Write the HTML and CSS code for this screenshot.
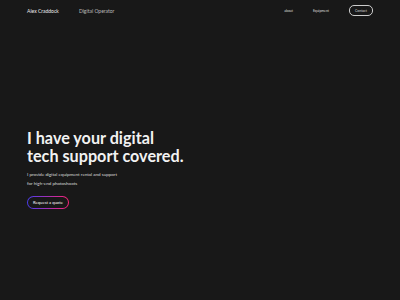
FILE: index.html
```html
<!DOCTYPE html>
<html lang="en">
<head>
    <meta charset="UTF-8">
    <meta name="viewport" content="width=device-width, initial-scale=1.0">
    <title>Alex Craddock - Digital Operator</title>
    <link rel="stylesheet" href="styles.css">
</head>
<body>
    <header class="nav">
        <div class="brand">
            <span class="name">Alex Craddock</span>
            <span class="role">Digital Operator</span>
        </div>
        <nav class="links">
            <a href="#about">about</a>
            <a href="#equipment">Equipment</a>
            <a href="#contact" class="contact">Contact</a>
        </nav>
    </header>

    <main class="hero">
        <h1>I have your digital<br>tech support covered.</h1>
        <p>I provide digital equipment rental and support<br>for high-end photoshoots</p>
        <a href="#quote" class="quote"><span>Request a quote</span></a>
    </main>
</body>
</html>
```

FILE: styles.css
```css
body {
    font-family: Lato, "Noto Sans", sans-serif;
    margin: 0;
    height: 100vh;
    background-color: #181818;
    color: #fff;
}

a {
    color: inherit;
    text-decoration: none;
}

.nav {
    display: flex;
    justify-content: space-between;
    align-items: center;
    padding: 5px 27px 0 27px;
    height: 11px;
    font-size: 5px;
}

.brand {
    display: flex;
    gap: 20px;
}

.name {
    color: #eee;
}

.role {
    color: #bbb;
}

.links {
    display: flex;
    align-items: center;
    gap: 20px;
    font-size: 3.4px;
    color: #ddd;
}

.contact {
    border: 1px solid #ccc;
    border-radius: 5px;
    height: 9px;
    width: 22px;
    display: flex;
    align-items: center;
    justify-content: center;
}

.hero {
    padding: 113px 27px 0 27px;
}

h1 {
    margin: 0;
    font-size: 16.2px;
    line-height: 17.5px;
    font-weight: 700;
    color: #f2f2f2;
}

.hero p {
    margin: 6px 0 0 0;
    font-size: 4.5px;
    line-height: 9px;
    color: #ddd;
}

.quote {
    display: inline-block;
    margin-top: 2px;
    padding: 1px;
    border-radius: 7px;
    background: linear-gradient(90deg, #4a3df0, #ff2277);
}

.quote span {
    display: flex;
    align-items: center;
    justify-content: center;
    width: 40px;
    height: 11px;
    border-radius: 6px;
    background: #181818;
    font-size: 4.2px;
}
```
